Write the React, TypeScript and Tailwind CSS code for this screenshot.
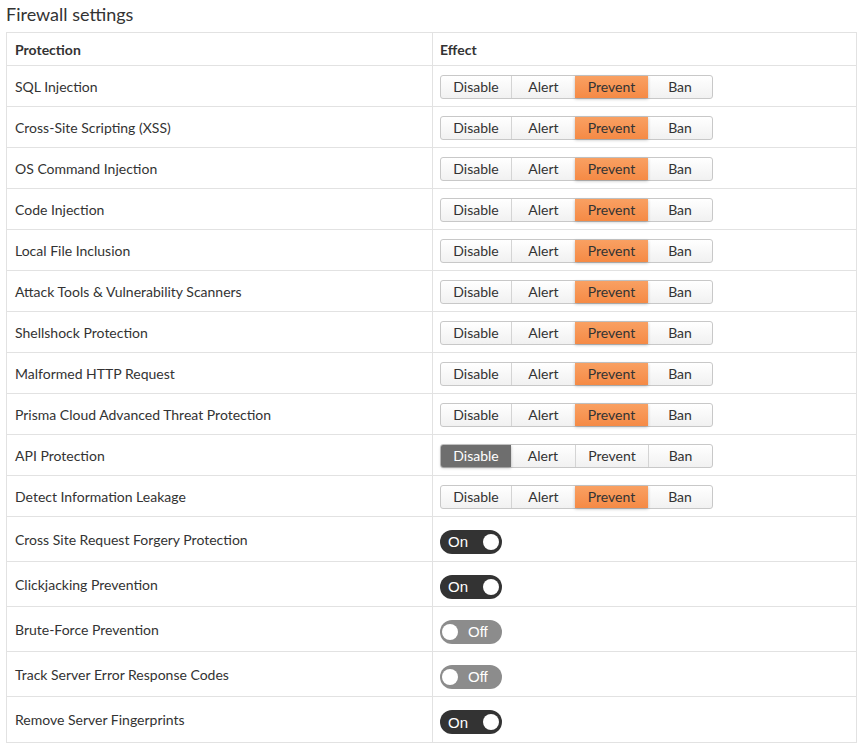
import React from "react";

type Effect = "Disable" | "Alert" | "Prevent" | "Ban";

const effectRows: { name: string; value: Effect }[] = [
  { name: "SQL Injection", value: "Prevent" },
  { name: "Cross-Site Scripting (XSS)", value: "Prevent" },
  { name: "OS Command Injection", value: "Prevent" },
  { name: "Code Injection", value: "Prevent" },
  { name: "Local File Inclusion", value: "Prevent" },
  { name: "Attack Tools & Vulnerability Scanners", value: "Prevent" },
  { name: "Shellshock Protection", value: "Prevent" },
  { name: "Malformed HTTP Request", value: "Prevent" },
  { name: "Prisma Cloud Advanced Threat Protection", value: "Prevent" },
  { name: "API Protection", value: "Disable" },
  { name: "Detect Information Leakage", value: "Prevent" },
];

const toggleRows: { name: string; on: boolean }[] = [
  { name: "Cross Site Request Forgery Protection", on: true },
  { name: "Clickjacking Prevention", on: true },
  { name: "Brute-Force Prevention", on: false },
  { name: "Track Server Error Response Codes", on: false },
  { name: "Remove Server Fingerprints", on: true },
];

const segments: { label: Effect; width: string }[] = [
  { label: "Disable", width: "w-[70px]" },
  { label: "Alert", width: "w-[64px]" },
  { label: "Prevent", width: "w-[73px]" },
  { label: "Ban", width: "w-[64px]" },
];

const EffectGroup = ({ value }: { value: Effect }) => (
  <div className="flex h-[24px] rounded-[3px] border border-[#c8c8c8] bg-gradient-to-b from-white to-[#f1f1f1]">
    {segments.map((s, i) => {
      const active = s.label === value;
      let cls = "text-[#333]";
      if (active && value === "Prevent") {
        cls =
          "bg-gradient-to-b from-[#f9a062] to-[#f58a45] text-[#333] shadow-[0_1px_3px_rgba(0,0,0,0.25)]";
      } else if (active) {
        cls =
          "bg-[#6e6e6e] text-white rounded-l-[2px] shadow-[0_1px_3px_rgba(0,0,0,0.3)]";
      }
      const divider =
        i > 0 && !active && segments[i - 1].label !== value
          ? "border-l border-[#d4d4d4]"
          : "";
      return (
        <div
          key={s.label}
          className={`${s.width} ${cls} ${divider} flex items-center justify-center text-[14px] leading-none`}
        >
          {s.label}
        </div>
      );
    })}
  </div>
);

const Toggle = ({ on }: { on: boolean }) => (
  <div
    className={`flex h-[24px] w-[62px] items-center rounded-full ${
      on ? "bg-[#333333] justify-between pl-[8px] pr-[3px]" : "bg-[#8c8c8c] gap-[10px] pl-[2px]"
    }`}
  >
    {on ? (
      <>
        <span className="font-['Liberation_Sans',sans-serif] text-[15px] leading-none text-white">
          On
        </span>
        <span className="h-[16px] w-[16px] rounded-full bg-white" />
      </>
    ) : (
      <>
        <span className="h-[16px] w-[16px] rounded-full bg-white" />
        <span className="font-['Liberation_Sans',sans-serif] text-[15px] leading-none text-white">
          Off
        </span>
      </>
    )}
  </div>
);

export default function App() {
  return (
    <div className="min-h-screen bg-white font-['Lato',sans-serif] text-[#333]">
      <div className="px-[6px] pt-[3px]">
        <h1 className="text-[18px] leading-[22px] text-[#333]">Firewall settings</h1>
        <div className="mt-[7px] w-[851px] border border-[#e2e2e2]">
          <div className="flex h-[33px] border-b border-[#e2e2e2] text-[14px] font-bold">
            <div className="flex w-[426px] items-center border-r border-[#e2e2e2] px-[8px] pt-[1px]">
              Protection
            </div>
            <div className="flex items-center pl-[7px] pt-[1px]">Effect</div>
          </div>
          {effectRows.map((r) => (
            <div
              key={r.name}
              className="flex h-[41px] border-b border-[#e2e2e2] text-[14px]"
            >
              <div className="flex w-[426px] items-center border-r border-[#e2e2e2] px-[8px] pt-[1px]">
                {r.name}
              </div>
              <div className="flex items-center pl-[7px] pt-[2px]">
                <EffectGroup value={r.value} />
              </div>
            </div>
          ))}
          {toggleRows.map((r, i) => (
            <div
              key={r.name}
              className={`flex h-[45px] text-[14px] ${
                i < toggleRows.length - 1 ? "border-b border-[#e2e2e2]" : ""
              }`}
            >
              <div className="flex w-[426px] items-center border-r border-[#e2e2e2] px-[8px]">
                {r.name}
              </div>
              <div className="flex items-center pl-[7px] pt-[5px]">
                <Toggle on={r.on} />
              </div>
            </div>
          ))}
        </div>
      </div>
    </div>
  );
}
